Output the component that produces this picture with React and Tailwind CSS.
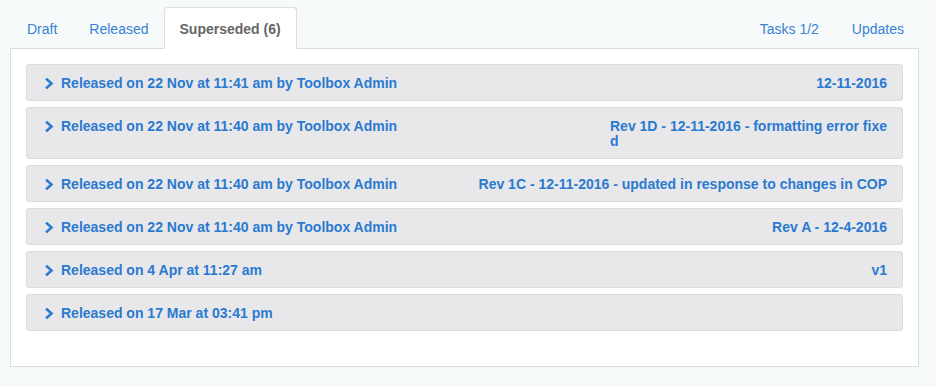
import React from 'react';

const rows = [
  { left: 'Released on 22 Nov at 11:41 am by Toolbox Admin', right: '12-11-2016' },
  { left: 'Released on 22 Nov at 11:40 am by Toolbox Admin', right: ['Rev 1D - 12-11-2016 - formatting error fixe', 'd'] },
  { left: 'Released on 22 Nov at 11:40 am by Toolbox Admin', right: 'Rev 1C - 12-11-2016 - updated in response to changes in COP' },
  { left: 'Released on 22 Nov at 11:40 am by Toolbox Admin', right: 'Rev A - 12-4-2016' },
  { left: 'Released on 4 Apr at 11:27 am', right: 'v1' },
  { left: 'Released on 17 Mar at 03:41 pm', right: '' },
];

const Chevron = () => (
  <svg width="9" height="11" viewBox="0 0 9 11" className="shrink-0">
    <polyline points="2,1.5 6.5,5.5 2,9.5" fill="none" stroke="#2a7ad0" strokeWidth="2.6" strokeLinecap="square" />
  </svg>
);

const Tab = ({ children, active, className = '' }) =>
  active ? (
    <div className={`h-[42px] mb-[-1px] px-[15px] pt-[3px] flex items-center bg-white border border-[#dddddd] border-b-white rounded-t-[4px] font-bold text-[#666666] relative z-10 ${className}`}>
      {children}
    </div>
  ) : (
    <div className={`h-[41px] px-[15px] pt-[3px] flex items-center text-[#3782d4] ${className}`}>{children}</div>
  );

export default function App() {
  return (
    <div className="w-[936px] h-[387px] bg-[#f7fafa] pl-[10px] pr-[17px] text-[14px]" style={{ fontFamily: '"Liberation Sans", Arial, sans-serif' }}>
      <div className="h-[48px] flex items-end justify-between">
        <div className="flex items-end pl-[2px]">
          <Tab className="mr-[2px]">Draft</Tab>
          <Tab>Released</Tab>
          <Tab active>Superseded (6)</Tab>
        </div>
        <div className="flex items-end gap-[3px]">
          <Tab>Tasks 1/2</Tab>
          <Tab>Updates</Tab>
        </div>
      </div>
      <div className="bg-white border border-[#dddddd] px-[15px] pt-[15px] pb-[35px] flex flex-col gap-[6px]">
        {rows.map((r, i) => (
          <div key={i} className="bg-[#e8e8ea] border border-[#dcdcde] rounded-[3px] pl-[18px] pr-[15px] pt-[11px] pb-[9px] flex justify-between items-start text-[14px] leading-[15px] font-bold text-[#2a7ad0]">
            <div className="flex items-center gap-[7px]">
              <Chevron />
              <span>{r.left}</span>
            </div>
            <div className="text-left">
              {Array.isArray(r.right) ? (
                <>
                  {r.right[0]}
                  <br />
                  {r.right[1]}
                </>
              ) : (
                r.right
              )}
            </div>
          </div>
        ))}
      </div>
    </div>
  );
}
